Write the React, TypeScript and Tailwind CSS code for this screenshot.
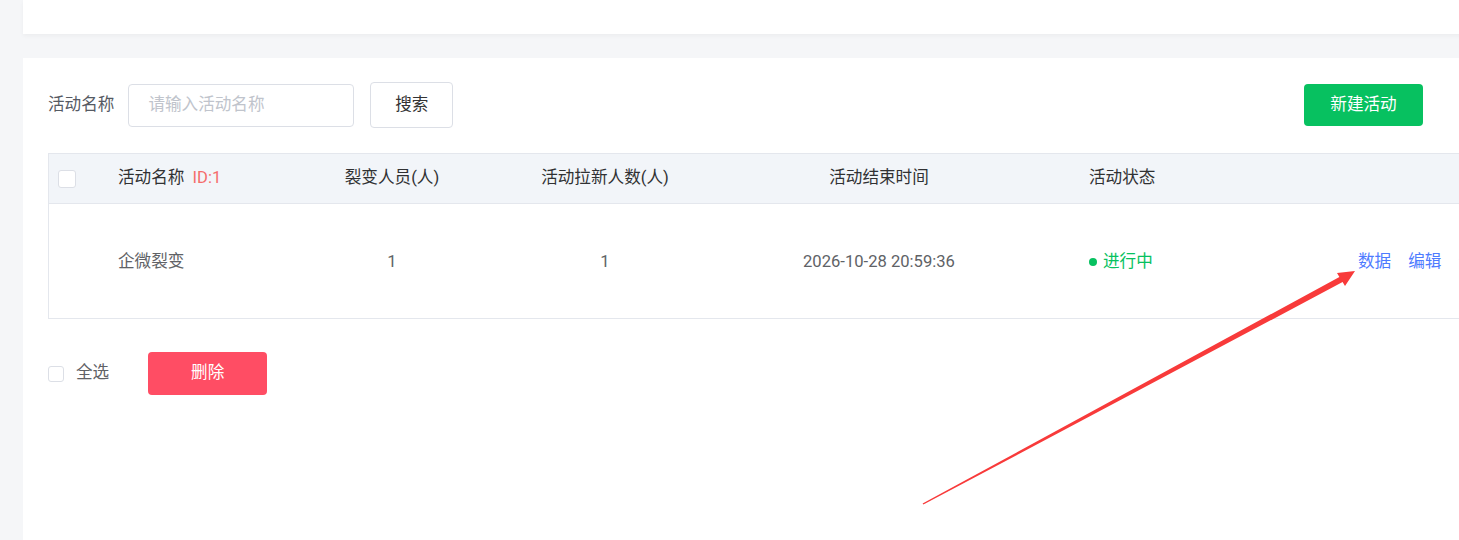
import React from "react";

const font = "font-['Roboto','Noto_Sans_CJK_SC',sans-serif]";

const Checkbox = ({ size = "h-[18px] w-[18px]" }: { size?: string }) => (
  <span
    className={`${size} inline-block rounded-[3px] border border-[#dcdfe6] bg-white`}
  />
);

const rows = [
  {
    name: "企微裂变",
    fission: 1,
    newUsers: 1,
    endTime: "2026-10-28 20:59:36",
    status: "进行中",
  },
];

const cols = "grid grid-cols-[60px_183px_200px_226px_322px_49px_241px_220px]";

const App = () => {
  return (
    <div
      className={`${font} relative h-[540px] w-full overflow-hidden bg-[#f5f6f8] pl-[23px] text-[16.6px]`}
    >
      <div className="flex h-full w-[1500px] flex-col">
        {/* top card */}
        <div className="h-[34px] bg-white shadow-[0_2px_4px_rgba(0,0,0,0.04)]" />

        {/* list card */}
        <div className="mt-[24px] flex-1 bg-white pl-[25px] pt-[24px]">
          <div className="flex w-[1375px] items-center">
            <span className="text-[#555a63]">活动名称</span>
            <div className="ml-[14px] flex h-[43px] w-[226px] items-center rounded-[4px] border border-[#dcdfe6] px-[19px] text-[#c0c4cc]">
              请输入活动名称
            </div>
            <button className="ml-[16px] h-[46px] w-[83px] rounded-[4px] border border-[#dcdfe6] bg-white text-[#333]">
              搜索
            </button>
            <button className="ml-auto h-[42px] w-[119px] rounded-[4px] bg-[#07c160] text-white">
              新建活动
            </button>
          </div>

          {/* table */}
          <div className="mt-[25px] border-l border-[#e4e7ed]">
            <div
              className={`${cols} h-[51px] items-center border-y border-[#e4e7ed] bg-[#f2f5f9] text-[#303133]`}
            >
              <div className="flex pl-[9px]">
                <Checkbox />
              </div>
              <div className="pl-[9px]">
                活动名称 <span className="ml-[4px] text-[#f56c6c]">ID:1</span>
              </div>
              <div className="text-center">裂变人员(人)</div>
              <div className="text-center">活动拉新人数(人)</div>
              <div className="text-center">活动结束时间</div>
              <div />
              <div>活动状态</div>
              <div />
            </div>
            {rows.map((r) => (
              <div
                key={r.name}
                className={`${cols} h-[115px] items-center border-b border-[#e4e7ed] pt-[2px] text-[#606266]`}
              >
                <div />
                <div className="pl-[9px]">{r.name}</div>
                <div className="text-center">{r.fission}</div>
                <div className="text-center">{r.newUsers}</div>
                <div className="text-center">{r.endTime}</div>
                <div />
                <div className="flex items-center text-[#07c160]">
                  <span className="mr-[6px] h-[8px] w-[8px] rounded-full bg-[#07c160]" />
                  {r.status}
                </div>
                <div className="flex gap-[17px] pl-[28px] text-[#4e7bff]">
                  <span>数据</span>
                  <span>编辑</span>
                  <span>删除</span>
                </div>
              </div>
            ))}
          </div>

          <div className="mt-[33px] flex items-center">
            <Checkbox size="h-[16px] w-[16px]" />
            <span className="ml-[12px] text-[#606266]">全选</span>
            <button className="ml-[39px] h-[43px] w-[119px] rounded-[4px] bg-[#ff4d64] text-white">
              删除
            </button>
          </div>
        </div>
      </div>

      {/* annotation arrow */}
      <svg
        className="pointer-events-none absolute left-0 top-0"
        width="1459"
        height="540"
        viewBox="0 0 1459 540"
      >
        <polygon
          points="922.6,503.6 1339.4,276.9 1337,273 1355,271 1345,286 1342.6,282.1 923.4,504.6"
          fill="#f83a3a"
        />
      </svg>
    </div>
  );
};

export default App;
